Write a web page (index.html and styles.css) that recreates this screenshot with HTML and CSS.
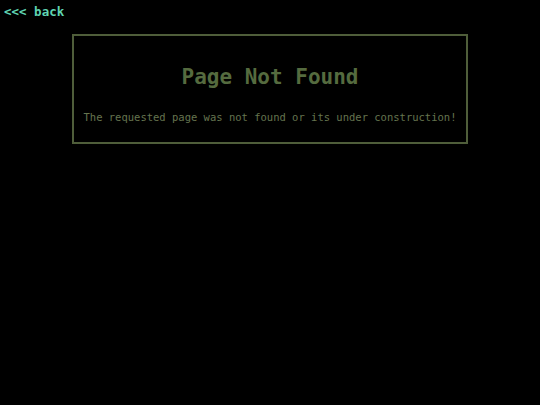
FILE: index.html
```html
<!DOCTYPE html>
<html>
<head>
<meta charset="utf-8">
<link rel="stylesheet" href="styles.css">
</head>
<body>
<a class="back" href="#">&lt;&lt;&lt; back</a>
<main class="box">
  <h1 class="title">Page Not Found</h1>
  <p class="msg">The requested page was not found or its under construction!</p>
</main>
</body>
</html>
```
FILE: styles.css
```css
html, body {
  margin: 0;
  background: #000;
  height: 100%;
}
body {
  font-family: "DejaVu Sans Mono", "Liberation Mono", monospace;
  padding-top: 4px;
}
.back {
  display: block;
  margin-left: 4px;
  color: #5fd4b2;
  font-weight: bold;
  font-size: 12.5px;
  line-height: 15px;
  text-decoration: none;
}
.box {
  width: 392px;
  margin: 15px auto 0;
  border: 2px solid #4f5e3a;
  height: 106px;
  display: flex;
  flex-direction: column;
  align-items: center;
}
.title {
  margin: 29px 0 0;
  color: #556b3f;
  font-size: 21px;
  line-height: 24px;
  font-weight: bold;
}
.msg {
  margin: 22px 0 0;
  color: #65744f;
  font-size: 10.5px;
  line-height: 12px;
  white-space: nowrap;
}
```
